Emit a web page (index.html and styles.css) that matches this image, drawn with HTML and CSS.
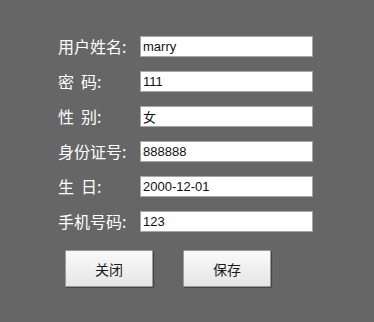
FILE: index.html
```html
<!DOCTYPE html>
<html lang="zh">
<head>
<meta charset="utf-8">
<link rel="stylesheet" href="styles.css">
</head>
<body>
<div class="page">
  <div class="form">
    <label class="lbl">用户姓名:</label><input class="inp" type="text" value="marry">
    <label class="lbl">密<span class="gap"></span>码:</label><input class="inp" type="text" value="111">
    <label class="lbl">性<span class="gap"></span>别:</label><input class="inp" type="text" value="女">
    <label class="lbl">身份证号:</label><input class="inp" type="text" value="888888">
    <label class="lbl">生<span class="gap"></span>日:</label><input class="inp" type="text" value="2000-12-01">
    <label class="lbl">手机号码:</label><input class="inp" type="text" value="123">
  </div>
  <div class="actions">
    <button class="btn" type="button">关闭</button>
    <button class="btn" type="button">保存</button>
  </div>
</div>
</body>
</html>
```

FILE: styles.css
```css
html, body {
  margin: 0;
  padding: 0;
  background: #666666;
  width: 374px;
  height: 322px;
  overflow: hidden;
}
.page {
  padding: 36px 0 0 58px;
  font-family: "Noto Sans CJK SC", "Liberation Sans", sans-serif;
}
.form {
  display: grid;
  grid-template-columns: 82px 173px;
  grid-auto-rows: 21px;
  row-gap: 14px;
  align-items: center;
}
.lbl {
  color: #ffffff;
  font-size: 16px;
  line-height: 21px;
  white-space: nowrap;
}
.gap {
  display: inline-block;
  width: 7px;
}
.inp {
  box-sizing: border-box;
  width: 173px;
  height: 21px;
  margin: 0;
  padding: 0 2px;
  border: 1px solid #a6a6a6;
  background: #ffffff;
  color: #111111;
  font-family: "Liberation Sans", "Noto Sans CJK SC", sans-serif;
  font-size: 13px;
  outline: none;
}
.actions {
  display: flex;
  gap: 30px;
  margin: 18px 0 0 7px;
}
.btn {
  box-sizing: border-box;
  width: 88px;
  height: 37px;
  margin: 0;
  padding: 0;
  border: 1px solid #9a9a9a;
  border-radius: 1px;
  background: linear-gradient(#fafafa, #e6e6e6);
  box-shadow: 1px 1px 1px rgba(0,0,0,0.35);
  color: #1a1a1a;
  font-family: "Noto Sans CJK SC", sans-serif;
  font-size: 14px;
}
```
